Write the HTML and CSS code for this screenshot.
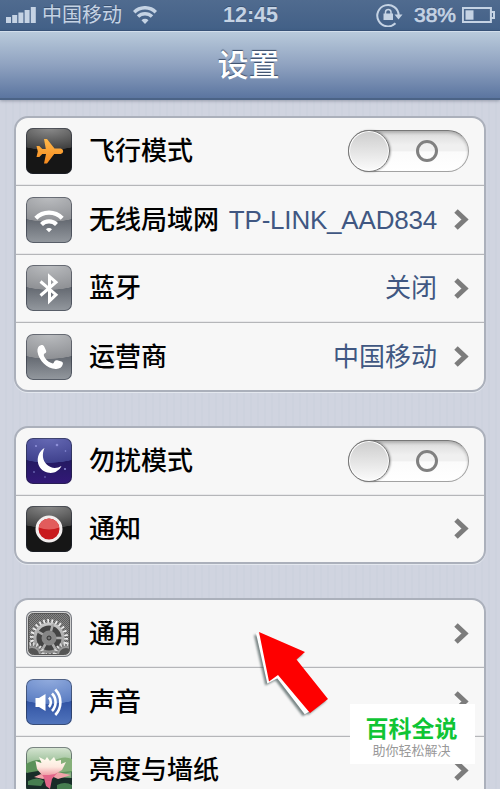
FILE: index.html
```html
<!DOCTYPE html>
<html lang="zh-CN">
<head>
    <meta charset="UTF-8">
    <meta name="viewport" content="width=device-width, initial-scale=1.0">
    <title>设置</title>
    <link rel="stylesheet" href="styles.css">
</head>
<body>
    <div class="status-bar">
        <div class="status-left">
            <svg class="signal" width="30" height="16" viewBox="0 0 30 16">
                <path d="M0 10h5v6H0zM6.200 8h5v8h-5zM12.400 5.500h5V16h-5zM18.600 3h5v13h-5zM24.800 0h5v16h-5z"/>
            </svg>
            <span class="carrier">中国移动</span>
            <svg class="wifi" width="24" height="18" viewBox="0 0 24 18">
                <path d="M1.200 6.200a15.300 15.300 0 0 1 21.600 0M5 10.600a10 10 0 0 1 14 0"/>
                <path class="dot" d="M12 18l-3.500-3.700a5 5 0 0 1 7 0z"/>
            </svg>
        </div>
        <div class="clock">12:45</div>
        <div class="status-right">
            <svg class="lock" width="28" height="24" viewBox="0 0 28 24">
                <path class="ring" d="M19.500 20.300A10.700 10.700 0 1 1 22.700 12.500"/>
                <path class="solid" d="M18.500 11.500h8l-4 5z"/>
                <path class="solid" d="M7.500 10.500h9.500v6.500H7.500z"/>
                <path class="ring thin" d="M9.500 11V8.800a2.800 2.800 0 0 1 5.500 0V11"/>
            </svg>
            <span class="percent">38%</span>
            <svg class="battery" width="33" height="16" viewBox="0 0 33 16">
                <path class="case" d="M.9.900h28v14.200H.9zM29 5h3v6h-3"/>
                <path class="solid" d="M3.500 3.300h8v9.400h-8z"/>
            </svg>
        </div>
    </div>
    <header class="nav-bar">
        <h1>设置</h1>
    </header>

    <main class="settings">
        <ul class="group">
            <li class="row">
                <span class="icon icon-black">
                    <svg width="46" height="46" viewBox="0 0 46 46">
                        <defs>
                            <linearGradient id="orange" x1="0" y1="0" x2="0" y2="1">
                                <stop offset="0" stop-color="#ffb84a"/>
                                <stop offset="1" stop-color="#f68a1e"/>
                            </linearGradient>
                        </defs>
                        <path fill="url(#orange)" d="M10.500 18h2.800l3 3h3.500L18 11h3L28.500 20.500h6.200q2.500.5 2.500 2.800t-2.500 2.700h-6.500L21 35.500h-3l2-9.500h-3.700l-3 3h-2.800l1.300-5.500z"/>
                    </svg>
                </span>
                <span class="label">飞行模式</span>
                <span class="switch"></span>
            </li>
            <li class="row">
                <span class="icon icon-gray">
                    <svg width="46" height="46" viewBox="0 0 46 46">
                        <path fill="none" stroke="#fff" stroke-width="4.200" d="M9.800 21.200a18.500 18.500 0 0 1 26.400 0M15.500 27.500a10.700 10.700 0 0 1 15 0"/>
                        <path fill="#fff" d="M23 35.200l-3-3a4.200 4.200 0 0 1 6 0z"/>
                    </svg>
                </span>
                <span class="label">无线局域网</span>
                <span class="value latin">TP-LINK_AAD834</span>
                <svg class="chevron" width="15" height="21" viewBox="0 0 15 21"><path d="M2 2l9 8.500L2 19"/></svg>
            </li>
            <li class="row">
                <span class="icon icon-gray">
                    <svg width="46" height="46" viewBox="0 0 46 46">
                        <path fill="none" stroke="#fff" stroke-width="3" d="M14.500 16.500l15.500 13.200-6.500 6.300V11.500l6.500 5.700L14.500 30.500"/>
                    </svg>
                </span>
                <span class="label">蓝牙</span>
                <span class="value">关闭</span>
                <svg class="chevron" width="15" height="21" viewBox="0 0 15 21"><path d="M2 2l9 8.500L2 19"/></svg>
            </li>
            <li class="row">
                <span class="icon icon-gray">
                    <svg width="46" height="46" viewBox="0 0 46 46">
                        <path fill="#fff" d="M14.800 11.200c-2.500.6-3.700 3.200-3.300 6.500 1.200 8.800 9.500 17 18.200 17.300 4 .2 6.300-1.800 7-4.400.5-1.700.2-2.700-1.300-3.200l-4.200-1.100c-1.700-.4-2.500.3-3.300 2.300-.5 1.200-2 1-3.700 0-2.600-1.600-4.800-3.800-6-6.200-.8-1.600-.4-2.600.8-3.100 1.500-.7 1.500-1.800.8-3.400l-1.500-3.200c-.7-1.400-1.800-1.900-3.500-1.500z"/>
                    </svg>
                </span>
                <span class="label">运营商</span>
                <span class="value">中国移动</span>
                <svg class="chevron" width="15" height="21" viewBox="0 0 15 21"><path d="M2 2l9 8.500L2 19"/></svg>
            </li>
        </ul>

        <ul class="group">
            <li class="row">
                <span class="icon icon-night">
                    <svg width="46" height="46" viewBox="0 0 46 46">
                        <g fill="#8d8fd8">
                            <circle cx="10" cy="8" r="1.100"/><circle cx="31" cy="7" r="1.300"/><circle cx="39.500" cy="13" r=".8"/>
                            <circle cx="8" cy="34" r=".8"/><circle cx="39" cy="31" r="1"/><circle cx="19" cy="39" r=".7"/>
                        </g>
                        <path fill="#fff" d="M18.500 10c-8.800 5.200-9 18.200-.3 23.200 6.600 3.600 14.200 1.300 17.300-5.200-4.800 2.900-10.700 2.500-14.500-1.200-4.600-4.400-5.200-10.600-2.500-16.800z"/>
                    </svg>
                </span>
                <span class="label">勿扰模式</span>
                <span class="switch"></span>
            </li>
            <li class="row">
                <span class="icon icon-black">
                    <svg width="46" height="46" viewBox="0 0 46 46">
                        <circle cx="23" cy="23" r="12" fill="#c8181c" stroke="#f2eded" stroke-width="3"/>
                        <path fill="#e25c5c" d="M12.600 21.500a10.500 10.500 0 0 1 20.800 0q-10.400 4-20.800 0z"/>
                    </svg>
                </span>
                <span class="label">通知</span>
                <svg class="chevron" width="15" height="21" viewBox="0 0 15 21"><path d="M2 2l9 8.500L2 19"/></svg>
            </li>
        </ul>

        <ul class="group last">
            <li class="row">
                <span class="icon icon-gear">
                    <svg width="46" height="46" viewBox="0 0 46 46">
                        <defs>
                            <pattern id="mesh" width="2" height="2" patternUnits="userSpaceOnUse">
                                <path fill="#5d5d5d" d="M0 0h2v2H0z"/><path fill="#858585" d="M0 0h1v1H0zM1 1h1v1H1z"/>
                            </pattern>
                            <linearGradient id="steel" x1="0" y1="0" x2="0" y2="1">
                                <stop offset="0" stop-color="#c8c8c8"/><stop offset="1" stop-color="#8c8c8c"/>
                            </linearGradient>
                            <clipPath id="frame"><rect x="3" y="3" width="40" height="40" rx="4"/></clipPath>
                        </defs>
                        <rect x="2.500" y="2.500" width="41" height="41" rx="5" fill="url(#mesh)" stroke="#555"/>
                        <g clip-path="url(#frame)">
                            <circle cx="23" cy="27" r="15" fill="#444"/>
                            <circle cx="23" cy="27" r="17" fill="none" stroke="#eee" stroke-width="4" stroke-dasharray="1.700 2.400"/>
                            <circle cx="23" cy="27" r="14" fill="none" stroke="url(#steel)" stroke-width="3"/>
                            <path stroke="#aaa" stroke-width="2.500" d="M23 27l4-14M23 27h14M23 27l7 12M23 27l-7 12M23 27L11 20"/>
                            <circle cx="23" cy="27" r="7.500" fill="#868686"/>
                            <circle cx="23" cy="27" r="2" fill="#777" stroke="#333"/>
                            <g fill="#777" stroke="#ddd" stroke-width="3.500" stroke-dasharray="1.500 2">
                                <circle cx="6" cy="44" r="11"/><circle cx="40" cy="44" r="11"/>
                            </g>
                            <circle cx="6" cy="44" r="8" fill="#555" stroke="#999" stroke-width="2"/>
                            <circle cx="40" cy="44" r="8" fill="#555" stroke="#999" stroke-width="2"/>
                        </g>
                    </svg>
                </span>
                <span class="label">通用</span>
                <svg class="chevron" width="15" height="21" viewBox="0 0 15 21"><path d="M2 2l9 8.500L2 19"/></svg>
            </li>
            <li class="row">
                <span class="icon icon-blue">
                    <svg width="46" height="46" viewBox="0 0 46 46">
                        <path fill="#fff" d="M9.500 19h3.500l6.500-4v17L13 28H9.500z"/>
                        <path fill="none" stroke="#fff" stroke-width="2.600" d="M23 18.500a7 7 0 0 1 0 9.500M26 14.500a12.500 12.500 0 0 1 0 17.500M29.300 10.500a18.500 18.500 0 0 1 0 25.500"/>
                    </svg>
                </span>
                <span class="label">声音</span>
                <svg class="chevron" width="15" height="21" viewBox="0 0 15 21"><path d="M2 2l9 8.500L2 19"/></svg>
            </li>
            <li class="row">
                <span class="icon icon-lotus">
                    <svg width="46" height="46" viewBox="0 0 46 46">
                        <defs>
                            <linearGradient id="petal" x1="0" y1="0" x2="0" y2="1">
                                <stop offset="0" stop-color="#fffdf0"/><stop offset=".55" stop-color="#fde9df"/><stop offset="1" stop-color="#f0a0a8"/>
                            </linearGradient>
                        </defs>
                        <path fill="#5c9159" d="M0 17q14-8 22 0l24-5v13L20 31 0 25z"/>
                        <path fill="#86b07a" d="M27 14q11-6 19-2v12l-19 2z"/>
                        <path fill="#182c28" d="M0 26l12-2 17 6 17 1v16H0z"/>
                        <path fill="#467e50" d="M2 34q10-5 16 0l-3 5-13-1zM31 38q8-4 15 0v6H31z"/>
                        <path fill="#f0a3a9" d="M23 30l-8-3-7 3 9 2zM23 28l8-3 14 3-13 4z"/>
                        <path fill="#e3668a" d="M14 24l9 2 9-1-6 7-2 10-4-3-2-8z"/>
                        <path fill="url(#petal)" d="M16 28l-5-6-1.500-8 6 2-2.500-6 6 3 2-3 3 4 4-4 2 4 5-1v4l5-2-4 8-7 4-6 1z"/>
                    </svg>
                </span>
                <span class="label">亮度与墙纸</span>
                <svg class="chevron" width="15" height="21" viewBox="0 0 15 21"><path d="M2 2l9 8.500L2 19"/></svg>
            </li>
        </ul>
    </main>

    <svg class="arrow" width="78" height="92" viewBox="0 0 78 92">
        <path class="arrow-edge" d="M7 8l11 49 9.500-5L55 88l5-3z"/>
        <path class="arrow-body" d="M9 7l46 20-8.500 7.500L78 74 60 88 28 50l-9 6.500z"/>
    </svg>
    <div class="badge">
        <div class="badge-title">百科全说</div>
        <div class="badge-text">助你轻松解决</div>
    </div>
</body>
</html>
```
FILE: styles.css
```css
* {
    box-sizing: border-box;
}
body {
    position: relative;
    width: 500px;
    height: 789px;
    margin: 0;
    overflow: hidden;
    font-family: "Liberation Sans", "Noto Sans CJK SC", sans-serif;
    background: repeating-linear-gradient(90deg, #d0d4e0 0, #d0d4e0 5px, #cdd2de 5px, #cdd2de 7px);
}
.status-bar {
    display: grid;
    grid-template-columns: 1fr auto 1fr;
    align-items: center;
    height: 31px;
    padding: 0 5px 0 6px;
    color: #c5d3e4;
    background: linear-gradient(#506b8f, #426087);
    border-bottom: 1px solid #38547a;
    text-shadow: 0 -1px 0 #3a5272;
}
.status-bar svg {
    fill: #c5d3e4;
}
.status-left,
.status-right {
    display: flex;
    align-items: center;
}
.status-right {
    justify-content: flex-end;
}
.carrier {
    margin: 0 11px 0 6px;
    font-size: 20px;
    line-height: 30px;
}
.status-bar .wifi {
    fill: none;
    stroke: #c5d3e4;
    stroke-width: 3.5;
}
.wifi .dot {
    fill: #c5d3e4;
    stroke: none;
}
.clock {
    font-size: 21.5px;
    font-weight: bold;
}
.lock {
    margin-right: 10px;
}
.status-bar .ring,
.status-bar .case {
    fill: none;
    stroke: #c5d3e4;
    stroke-width: 2;
}
.status-bar .thin {
    stroke-width: 1.5;
}
.percent {
    margin-right: 6px;
    font-size: 21px;
    -webkit-text-stroke: 0.7px #c5d3e4;
}
.nav-bar {
    position: relative;
    height: 69px;
    background: linear-gradient(#b9cadb, #8fa2c0 50%, #5b75a0);
    border-top: 1px solid #d2deeb;
    border-bottom: 2px solid #4b6386;
    box-shadow: 0 1px 3px rgba(60, 70, 90, 0.4);
}
h1 {
    margin: 0;
    padding-right: 3px;
    color: #fff;
    font-size: 31px;
    font-weight: 500;
    line-height: 67px;
    text-align: center;
    text-shadow: 0 -1px 1px #3a4c68;
}
.settings {
    padding: 16px 14px 0 14px;
}
.group {
    margin: 0 0 34px;
    padding: 0;
    list-style: none;
    background: #f7f7f7;
    border: 2px solid #abb0bb;
    border-radius: 14px;
    box-shadow: 0 1px 0 #e4e8ef;
}
.row {
    display: flex;
    align-items: center;
    height: 68.8px;
    padding: 0 15px 0 10px;
    border-bottom: 1px solid #b5b6b9;
    box-shadow: inset 0 -1px 0 #e9e9eb;
}
.row:first-child {
    height: 67.8px;
}
.row:last-child {
    height: 66.5px;
    border-bottom: none;
    box-shadow: none;
}
.icon {
    display: block;
    flex: none;
    width: 46px;
    height: 46px;
    border-radius: 7px;
    overflow: hidden;
    box-shadow: inset 0 0 0 1px rgba(30, 35, 50, 0.5);
}
.icon svg {
    display: block;
}
.icon-black {
    background: radial-gradient(ellipse 50px 22px at 50% 0, #8c8c8c 0, #3f3f3f 98%, #161616 100%);
}
.icon-gray {
    background: radial-gradient(ellipse 50px 25px at 50% 0, #bbbdc0 0, #8f9195 98%, rgba(0, 0, 0, 0) 100%), linear-gradient(#666a71, #656a72 50%, #94999f);
}
.icon-night {
    background: radial-gradient(ellipse 50px 25px at 50% 0, #666ab5 0, #3f418d 98%, rgba(0, 0, 0, 0) 100%), linear-gradient(#28246b, #241a62 50%, #331878);
}
.icon-blue {
    background: radial-gradient(ellipse 50px 25px at 50% 0, #92acde 0, #5b7dc2 98%, rgba(0, 0, 0, 0) 100%), linear-gradient(#3254a4, #3254a4 50%, #5276bd);
}
.icon-gear {
    background: #cfcfcf;
}
.icon-lotus {
    background: linear-gradient(#d8e6d4, #7fae7c 50%);
}
.label {
    margin-left: 17px;
    color: #000;
    font-size: 26px;
    font-weight: 500;
    line-height: 36px;
    white-space: nowrap;
}
.value {
    margin-left: auto;
    color: #405782;
    font-size: 26px;
    line-height: 36px;
    white-space: nowrap;
}
.latin {
    letter-spacing: -0.2px;
}
.chevron {
    flex: none;
    margin-left: 17px;
    fill: none;
    stroke: #7c7c7c;
    stroke-width: 5;
}
.label + .chevron {
    margin-left: auto;
}
.switch {
    display: flex;
    align-items: center;
    justify-content: space-between;
    width: 121px;
    height: 42px;
    margin-left: auto;
    padding-right: 30px;
    border: 1px solid #a2a2a2;
    border-top-color: #777;
    border-radius: 21px;
    background: linear-gradient(#d9d9d9, #f0f0f0 35%, #f0f0f0 50%, #fbfbfb 52%, #fff);
    box-shadow: inset 0 2px 3px rgba(0, 0, 0, 0.2);
}
.switch::before {
    content: "";
    box-sizing: border-box;
    width: 42px;
    height: 42px;
    margin-left: -1px;
    border: 1px solid #777;
    border-radius: 50%;
    background: linear-gradient(#cdcdcd, #fbfbfb);
    box-shadow: inset 0 0 0 1px #fff, 1px 0 2px rgba(0, 0, 0, 0.3);
}
.switch::after {
    content: "";
    box-sizing: border-box;
    width: 22px;
    height: 22px;
    border: 3px solid #808080;
    border-radius: 50%;
}
.arrow {
    position: absolute;
    left: 250px;
    top: 625px;
    filter: drop-shadow(-2px 2px 1px rgba(40, 60, 60, 0.6));
}
.arrow-edge {
    fill: #fff;
    stroke: #fff;
    stroke-width: 2;
}
.arrow-body {
    fill: #fe0000;
}
.badge {
    position: absolute;
    left: 350px;
    top: 704px;
    width: 125px;
    height: 60px;
    padding-top: 11px;
    padding-right: 2px;
    text-align: center;
    background: #fff;
}
.badge-title {
    color: #0fc535;
    font-size: 23px;
    font-weight: bold;
    line-height: 29px;
}
.badge-text {
    color: #999;
    font-size: 13px;
    line-height: 14px;
}
```
